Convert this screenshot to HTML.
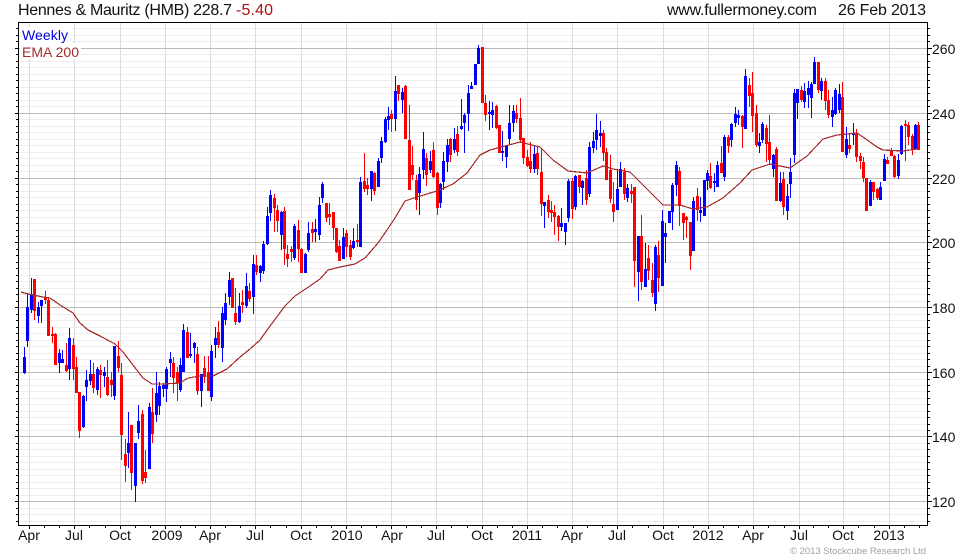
<!DOCTYPE html>
<html><head><meta charset="utf-8"><title>Hennes &amp; Mauritz</title>
<style>html,body{margin:0;padding:0;background:#fff}svg{display:block}text{font-family:"Liberation Sans",Arial,sans-serif;font-size:14px;fill:#111}</style></head>
<body>
<svg width="980" height="560" viewBox="0 0 980 560" xmlns="http://www.w3.org/2000/svg">
<rect width="980" height="560" fill="#fff"/>
<g shape-rendering="crispEdges" fill="none">
<path stroke="#eeeeee" d="M18 28.5H928M18 35.5H928M18 41.5H928M18 54.5H928M18 61.5H928M18 67.5H928M18 74.5H928M18 80.5H928M18 87.5H928M18 93.5H928M18 100.5H928M18 106.5H928M18 119.5H928M18 126.5H928M18 132.5H928M18 139.5H928M18 145.5H928M18 152.5H928M18 158.5H928M18 165.5H928M18 171.5H928M18 184.5H928M18 191.5H928M18 197.5H928M18 204.5H928M18 210.5H928M18 217.5H928M18 223.5H928M18 230.5H928M18 236.5H928M18 249.5H928M18 255.5H928M18 262.5H928M18 268.5H928M18 275.5H928M18 281.5H928M18 288.5H928M18 294.5H928M18 301.5H928M18 314.5H928M18 320.5H928M18 327.5H928M18 333.5H928M18 340.5H928M18 346.5H928M18 353.5H928M18 359.5H928M18 366.5H928M18 379.5H928M18 385.5H928M18 391.5H928M18 398.5H928M18 404.5H928M18 411.5H928M18 417.5H928M18 424.5H928M18 430.5H928M18 443.5H928M18 449.5H928M18 456.5H928M18 462.5H928M18 469.5H928M18 475.5H928M18 482.5H928M18 488.5H928M18 495.5H928M18 508.5H928M18 514.5H928M18 521.5H928"/>
<path stroke="#dddddd" d="M29.5 22V525M74.5 22V525M120.5 22V525M165.5 22V525M210.5 22V525M255.5 22V525M301.5 22V525M346.5 22V525M391.5 22V525M436.5 22V525M482.5 22V525M527.5 22V525M572.5 22V525M617.5 22V525M663.5 22V525M708.5 22V525M753.5 22V525M799.5 22V525M843.5 22V525M889.5 22V525"/>
<path stroke="#bbbbbb" d="M18 48.5H928M18 113.5H928M18 178.5H928M18 242.5H928M18 307.5H928M18 372.5H928M18 436.5H928M18 501.5H928"/>
</g>
<rect x="20" y="27" width="51" height="16" fill="#fff"/>
<rect x="20" y="43" width="61" height="16" fill="#fff"/>
<g shape-rendering="crispEdges" fill="none">
<path stroke="#0000ff" stroke-width="1" d="M24.5 347V374M27.5 293V347M31.5 278V313M38.5 302V323M41.5 300V323M59.5 349V373M62.5 350V363M69.5 328V380M83.5 395V428M86.5 370V401M90.5 360V385M97.5 367V395M104.5 367V387M114.5 346V400M128.5 412V468M135.5 443V502M138.5 405V439M149.5 403V469M156.5 372V422M159.5 382V415M163.5 383V397M166.5 367V402M170.5 352V377M180.5 358V392M183.5 324V372M190.5 333V358M194.5 342V363M201.5 374V407M211.5 345V401M215.5 327V358M222.5 307V362M225.5 293V325M229.5 272V305M239.5 293V323M246.5 273V308M253.5 255V314M260.5 265V282M263.5 241V274M267.5 207V245M270.5 190V221M281.5 211V250M294.5 224V260M305.5 253V273M308.5 222V252M315.5 219V242M319.5 197V240M322.5 182V203M343.5 228V259M353.5 228V249M360.5 177V247M371.5 171V201M378.5 158V187M381.5 137V163M385.5 117V143M388.5 107V130M395.5 76V131M402.5 88V113M419.5 167V215M423.5 132V179M430.5 151V173M440.5 183V208M443.5 152V190M447.5 139V172M454.5 128V153M461.5 99V130M464.5 113V153M468.5 85V131M471.5 82V89M475.5 64V85M478.5 45V64M489.5 101V130M492.5 102V128M502.5 131V161M506.5 145V168M509.5 105V145M513.5 105V132M534.5 146V173M544.5 202V228M561.5 208V231M565.5 223V245M568.5 179V222M575.5 175V210M582.5 180V205M589.5 142V197M593.5 132V153M596.5 114V150M600.5 121V147M617.5 169V210M620.5 162V187M627.5 184V202M638.5 236V301M645.5 243V287M655.5 245V311M662.5 210V286M665.5 223V263M669.5 211V223M672.5 183V230M676.5 161V196M693.5 197V250M700.5 197V222M704.5 180V216M707.5 170V190M714.5 173V192M717.5 161V187M724.5 135V181M731.5 123V147M735.5 107V127M738.5 110V125M745.5 69V129M759.5 133V153M762.5 122V143M773.5 154V177M780.5 172V202M787.5 184V220M790.5 158V198M794.5 89V163M797.5 89V119M804.5 83V108M808.5 81V108M811.5 82V118M814.5 57V84M821.5 78V100M832.5 97V127M835.5 88V115M839.5 84V113M846.5 127V158M853.5 123V145M870.5 180V206M880.5 182V200M884.5 154V181M898.5 154V179M901.5 125V155M915.5 124V149"/>
<path stroke="#0000ff" stroke-width="3" d="M24.5 357V373M27.5 307V341M31.5 294V310M38.5 307V316M41.5 300V306M59.5 353V363M62.5 359V363M69.5 338V369M83.5 396V427M86.5 380V387M90.5 374V381M97.5 369V390M104.5 372V376M114.5 346V396M128.5 443V453M135.5 443V486M138.5 421V433M149.5 407V469M156.5 393V415M159.5 386V406M163.5 385V389M166.5 369V389M170.5 359V363M180.5 365V390M183.5 330V372M190.5 354V356M194.5 343V348M201.5 374V391M211.5 351V397M215.5 338V345M222.5 313V348M225.5 303V320M229.5 280V297M239.5 306V322M246.5 286V306M253.5 264V297M260.5 266V273M263.5 244V271M267.5 216V244M270.5 195V213M281.5 212V235M294.5 226V258M305.5 254V273M308.5 233V250M315.5 229V232M319.5 205V235M322.5 184V198M343.5 237V259M353.5 241V248M360.5 182V247M371.5 171V189M378.5 161V187M381.5 141V158M385.5 119V142M388.5 116V120M395.5 91V119M402.5 92V100M419.5 174V193M423.5 149V170M430.5 161V170M440.5 184V203M443.5 161V182M447.5 145V162M454.5 139V150M461.5 126V129M464.5 115V123M468.5 93V114M471.5 86V89M475.5 64V85M478.5 48V64M489.5 112V114M492.5 110V115M502.5 151V153M506.5 146V157M509.5 123V139M513.5 111V123M534.5 154V169M544.5 202V206M561.5 223V227M565.5 223V232M568.5 181V218M575.5 176V207M582.5 181V188M589.5 147V194M593.5 141V148M596.5 130V140M600.5 133V136M617.5 189V210M620.5 169V187M627.5 188V198M638.5 236V272M645.5 269V287M655.5 247V304M662.5 221V286M665.5 233V237M669.5 211V223M672.5 185V212M676.5 165V185M693.5 201V251M700.5 210V213M704.5 180V216M707.5 173V181M714.5 181V183M717.5 165V187M724.5 137V177M731.5 124V140M735.5 114V123M738.5 115V118M745.5 76V129M759.5 142V146M762.5 124V140M773.5 155V169M780.5 183V201M787.5 196V211M790.5 172V184M794.5 93V155M797.5 89V103M804.5 91V102M808.5 88V95M811.5 84V98M814.5 62V84M821.5 81V91M832.5 110V117M835.5 90V114M839.5 94V110M846.5 139V155M853.5 133V135M870.5 182V206M880.5 187V200M884.5 159V181M898.5 160V176M901.5 126V154M915.5 125V149"/>
<path stroke="#ff0000" stroke-width="1" d="M34.5 279V320M45.5 291V304M48.5 298V336M52.5 327V343M55.5 333V365M66.5 343V372M73.5 338V380M76.5 357V393M79.5 392V438M93.5 363V393M100.5 365V398M107.5 360V396M111.5 372V397M118.5 341V372M121.5 363V460M125.5 439V482M131.5 425V490M142.5 410V484M145.5 450V483M152.5 388V443M173.5 357V393M177.5 367V401M187.5 327V358M197.5 347V395M204.5 356V383M208.5 356V391M218.5 321V348M232.5 278V308M235.5 288V325M242.5 290V313M249.5 283V302M256.5 255V275M274.5 194V232M277.5 205V232M284.5 207V265M287.5 245V267M291.5 246V262M298.5 220V262M301.5 248V273M312.5 222V242M326.5 203V222M329.5 203V225M333.5 212V240M336.5 228V253M339.5 240V261M346.5 230V257M350.5 240V260M357.5 224V247M364.5 153V192M367.5 178V195M374.5 172V195M391.5 110V132M398.5 85V101M405.5 85V139M409.5 105V190M412.5 146V180M416.5 175V210M426.5 153V186M433.5 142V178M437.5 172V215M450.5 138V162M457.5 126V156M482.5 47V103M485.5 95V121M496.5 105V129M499.5 125V153M516.5 105V123M520.5 98V143M523.5 138V164M527.5 150V167M530.5 142V173M537.5 147V175M541.5 149V216M548.5 195V218M551.5 201V222M554.5 205V235M558.5 215V241M572.5 178V219M579.5 175V193M586.5 170V205M603.5 130V161M606.5 148V180M610.5 155V203M613.5 182V222M624.5 168V200M631.5 184V203M634.5 187V287M641.5 215V290M648.5 245V280M652.5 263V297M658.5 241V292M679.5 167V226M683.5 213V240M686.5 216V238M690.5 222V270M697.5 188V221M710.5 163V189M721.5 146V173M728.5 135V153M742.5 115V148M749.5 78V107M752.5 72V132M756.5 105V147M766.5 125V162M769.5 115V165M776.5 147V201M783.5 172V215M801.5 86V102M818.5 62V93M825.5 78V110M828.5 90V118M842.5 82V152M849.5 133V153M856.5 129V162M860.5 153V169M863.5 157V182M866.5 178V211M873.5 182V200M877.5 188V200M887.5 157V164M891.5 148V156M894.5 155V178M905.5 120V161M908.5 122V145M912.5 134V155M918.5 122V150"/>
<path stroke="#ff0000" stroke-width="3" d="M34.5 279V311M45.5 297V300M48.5 300V336M52.5 334V336M55.5 334V365M66.5 365V371M73.5 345V369M76.5 367V393M79.5 392V431M93.5 374V388M100.5 370V375M107.5 377V395M111.5 380V385M118.5 356V368M121.5 375V435M125.5 454V466M131.5 425V473M142.5 414V481M145.5 472V478M152.5 412V434M173.5 363V378M177.5 372V383M187.5 332V358M197.5 354V391M204.5 368V377M208.5 372V391M218.5 332V345M232.5 278V308M235.5 313V322M242.5 302V305M249.5 291V299M256.5 265V272M274.5 198V208M277.5 210V221M284.5 211V249M287.5 254V259M291.5 249V252M298.5 230V249M301.5 249V273M312.5 229V233M326.5 203V218M329.5 214V217M333.5 212V228M336.5 228V252M339.5 246V261M346.5 233V247M350.5 245V257M357.5 240V242M364.5 181V189M367.5 185V189M374.5 173V191M391.5 114V119M398.5 85V94M405.5 86V139M409.5 140V190M412.5 165V175M416.5 180V200M426.5 158V175M433.5 150V177M437.5 173V208M450.5 139V155M457.5 134V152M482.5 47V103M485.5 103V115M496.5 106V128M499.5 125V153M516.5 113V119M520.5 118V140M523.5 138V158M527.5 157V166M530.5 161V169M537.5 153V169M541.5 172V204M548.5 200V212M551.5 210V213M554.5 212V217M558.5 216V227M572.5 181V209M579.5 175V187M586.5 178V200M603.5 133V153M606.5 152V180M610.5 170V199M613.5 204V212M624.5 172V194M631.5 191V194M634.5 187V261M641.5 236V282M648.5 258V271M652.5 280V293M658.5 255V278M679.5 171V206M683.5 213V223M686.5 217V220M690.5 222V256M697.5 196V210M710.5 176V188M721.5 163V173M728.5 137V146M742.5 116V127M749.5 85V96M752.5 93V116M756.5 113V145M766.5 128V144M769.5 142V160M776.5 149V201M783.5 179V207M801.5 90V100M818.5 62V90M825.5 81V101M828.5 100V115M842.5 97V152M849.5 145V149M856.5 134V157M860.5 156V161M863.5 162V178M866.5 178V211M873.5 182V192M877.5 189V198M887.5 160V164M891.5 150V156M894.5 156V177M905.5 124V126M908.5 125V137M912.5 136V149M918.5 125V150"/>
<path stroke="#a52a2a" stroke-width="1.2" stroke-linejoin="round" d="M21 292L28 294L43 297L50 298L60 305L73 313L80 323L88 330L100 336L115 344L123 352L133 365L143 378L152 384L163 384L180 383L188 378L200 376L213 376L227 369L240 357L250 349L260 340L270 326L285 306L295 296L310 286L320 279L328 270L340 267L355 264L365 258L378 243L387 230L395 218L405 201L417 197L437 191L453 184L467 173L480 155L490 150L505 146L520 142L540 147L553 160L568 171L587 173L603 166L613 169L630 172L650 192L663 205L680 205L693 209L707 207L723 198L740 183L752 170L770 164L790 168L807 156L823 139L837 135L857 133L863 137L877 147L883 150L903 151L917 149"/>
<path stroke="#000" d="M18 22.5H928M18.5 22V526M927.5 22V526M18 525.5H928"/>
<path stroke="#000" d="M16 28.5H18M16 35.5H18M16 41.5H18M15 48.5H18M16 54.5H18M16 61.5H18M16 67.5H18M16 74.5H18M16 80.5H18M16 87.5H18M16 93.5H18M16 100.5H18M16 106.5H18M15 113.5H18M16 119.5H18M16 126.5H18M16 132.5H18M16 139.5H18M16 145.5H18M16 152.5H18M16 158.5H18M16 165.5H18M16 171.5H18M15 178.5H18M16 184.5H18M16 191.5H18M16 197.5H18M16 204.5H18M16 210.5H18M16 217.5H18M16 223.5H18M16 230.5H18M16 236.5H18M15 242.5H18M16 249.5H18M16 255.5H18M16 262.5H18M16 268.5H18M16 275.5H18M16 281.5H18M16 288.5H18M16 294.5H18M16 301.5H18M15 307.5H18M16 314.5H18M16 320.5H18M16 327.5H18M16 333.5H18M16 340.5H18M16 346.5H18M16 353.5H18M16 359.5H18M16 366.5H18M15 372.5H18M16 379.5H18M16 385.5H18M16 391.5H18M16 398.5H18M16 404.5H18M16 411.5H18M16 417.5H18M16 424.5H18M16 430.5H18M15 436.5H18M16 443.5H18M16 449.5H18M16 456.5H18M16 462.5H18M16 469.5H18M16 475.5H18M16 482.5H18M16 488.5H18M16 495.5H18M15 501.5H18M16 508.5H18M16 514.5H18M16 521.5H18"/>
<path stroke="#000" d="M928 28.5H930M928 35.5H930M928 41.5H930M928 48.5H932M928 54.5H930M928 61.5H930M928 67.5H930M928 74.5H930M928 80.5H930M928 87.5H930M928 93.5H930M928 100.5H930M928 106.5H930M928 113.5H932M928 119.5H930M928 126.5H930M928 132.5H930M928 139.5H930M928 145.5H930M928 152.5H930M928 158.5H930M928 165.5H930M928 171.5H930M928 178.5H932M928 184.5H930M928 191.5H930M928 197.5H930M928 204.5H930M928 210.5H930M928 217.5H930M928 223.5H930M928 230.5H930M928 236.5H930M928 242.5H932M928 249.5H930M928 255.5H930M928 262.5H930M928 268.5H930M928 275.5H930M928 281.5H930M928 288.5H930M928 294.5H930M928 301.5H930M928 307.5H932M928 314.5H930M928 320.5H930M928 327.5H930M928 333.5H930M928 340.5H930M928 346.5H930M928 353.5H930M928 359.5H930M928 366.5H930M928 372.5H932M928 379.5H930M928 385.5H930M928 391.5H930M928 398.5H930M928 404.5H930M928 411.5H930M928 417.5H930M928 424.5H930M928 430.5H930M928 436.5H932M928 443.5H930M928 449.5H930M928 456.5H930M928 462.5H930M928 469.5H930M928 475.5H930M928 482.5H930M928 488.5H930M928 495.5H930M928 501.5H932M928 508.5H930M928 514.5H930M928 521.5H930"/>
<path stroke="#000" d="M29.5 526V529M74.5 526V529M120.5 526V529M165.5 526V529M210.5 526V529M255.5 526V529M301.5 526V529M346.5 526V529M391.5 526V529M436.5 526V529M482.5 526V529M527.5 526V529M572.5 526V529M617.5 526V529M663.5 526V529M708.5 526V529M753.5 526V529M799.5 526V529M843.5 526V529M889.5 526V529M44.5 526V528M59.5 526V528M89.5 526V528M105.5 526V528M135.5 526V528M150.5 526V528M180.5 526V528M195.5 526V528M225.5 526V528M240.5 526V528M270.5 526V528M286.5 526V528M316.5 526V528M331.5 526V528M361.5 526V528M376.5 526V528M406.5 526V528M421.5 526V528M451.5 526V528M467.5 526V528M497.5 526V528M512.5 526V528M542.5 526V528M557.5 526V528M587.5 526V528M602.5 526V528M632.5 526V528M648.5 526V528M678.5 526V528M693.5 526V528M723.5 526V528M738.5 526V528M768.5 526V528M784.5 526V528M813.5 526V528M828.5 526V528M858.5 526V528M874.5 526V528M904.5 526V528M919.5 526V528"/>
</g>
<text x="18" y="15" style="font-size:16px" textLength="214" lengthAdjust="spacing">Hennes &amp; Mauritz (HMB) 228.7</text>
<text x="236" y="15" style="font-size:16px;fill:#b01010" textLength="37" lengthAdjust="spacing">-5.40</text>
<text x="667" y="15" style="font-size:16px" textLength="150" lengthAdjust="spacing">www.fullermoney.com</text>
<text x="838" y="15" style="font-size:16px" textLength="88" lengthAdjust="spacing">26 Feb 2013</text>
<text x="22" y="40" style="fill:#0000dd" textLength="46" lengthAdjust="spacing">Weekly</text>
<text x="22" y="57" style="fill:#a52a2a" textLength="57" lengthAdjust="spacing">EMA 200</text>
<g>
<text x="932" y="54">260</text><text x="932" y="119">240</text><text x="932" y="184">220</text><text x="932" y="248">200</text><text x="932" y="313">180</text><text x="932" y="378">160</text><text x="932" y="442">140</text><text x="932" y="507">120</text>
</g>
<g text-anchor="middle">
<text x="29" y="540">Apr</text><text x="74" y="540">Jul</text><text x="120" y="540">Oct</text><text x="167" y="540">2009</text><text x="210" y="540">Apr</text><text x="255" y="540">Jul</text><text x="301" y="540">Oct</text><text x="347" y="540">2010</text><text x="392" y="540">Apr</text><text x="436" y="540">Jul</text><text x="482" y="540">Oct</text><text x="527" y="540">2011</text><text x="572" y="540">Apr</text><text x="617" y="540">Jul</text><text x="663" y="540">Oct</text><text x="708" y="540">2012</text><text x="753" y="540">Apr</text><text x="799" y="540">Jul</text><text x="843" y="540">Oct</text><text x="889" y="540">2013</text>
</g>
<text x="790" y="554" style="font-size:9.5px;fill:#a0a0a0" textLength="136" lengthAdjust="spacing">© 2013 Stockcube Research Ltd</text>
</svg>
</body></html>
